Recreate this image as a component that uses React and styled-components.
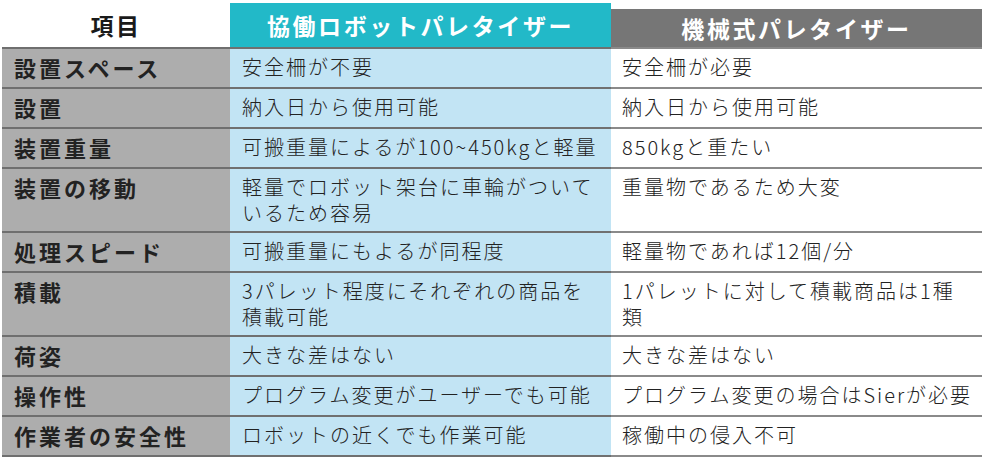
import React from "react";
import styled, { createGlobalStyle } from "styled-components";

const Global = createGlobalStyle`
  html, body { margin: 0; padding: 0; background: #ffffff; }
  body { font-family: "Noto Sans CJK JP", "Noto Sans", sans-serif; }
`;

const Table = styled.div`
  width: 980px;
  margin-left: 2px;
  display: grid;
  grid-template-columns: 228px 381px 371px;
`;

const HeadWrap = styled.div`
  height: 47px;
  display: flex;
  flex-direction: column;
  justify-content: flex-end;
`;

const HeadCell = styled.div`
  display: flex;
  align-items: center;
  justify-content: center;
  height: ${(p) => p.$h}px;
  background: ${(p) => p.$bg};
  color: ${(p) => p.$fg};
  font-weight: 700;
  font-size: 23px;
  letter-spacing: 2.6px;
`;

const Cell = styled.div`
  border-top: 2px solid ${(p) => p.$line};
  background: ${(p) => p.$bg};
  padding: 5px 4px 5px ${(p) => p.$pl}px;
  line-height: 26px;
  min-height: 28px;
  color: #222;
  font-size: ${(p) => (p.$head ? 22 : 20)}px;
  font-weight: ${(p) => (p.$head ? 700 : 300)};
  letter-spacing: ${(p) => (p.$head ? 3 : 2)}px;
  overflow: hidden;
`;

const Line = styled.span`
  display: block;
  white-space: nowrap;
`;

const BottomLine = styled.div`
  height: 2px;
  background: ${(p) => p.$line};
`;

const rows = [
  ["設置スペース", ["安全柵が不要"], ["安全柵が必要"]],
  ["設置", ["納入日から使用可能"], ["納入日から使用可能"]],
  ["装置重量", ["可搬重量によるが100~450kgと軽量"], ["850kgと重たい"]],
  ["装置の移動", ["軽量でロボット架台に車輪がついて", "いるため容易"], ["重量物であるため大変"]],
  ["処理スピード", ["可搬重量にもよるが同程度"], ["軽量物であれば12個/分"]],
  ["積載", ["3パレット程度にそれぞれの商品を", "積載可能"], ["1パレットに対して積載商品は1種", "類"]],
  ["荷姿", ["大きな差はない"], ["大きな差はない"]],
  ["操作性", ["プログラム変更がユーザーでも可能"], ["プログラム変更の場合はSierが必要"]],
  ["作業者の安全性", ["ロボットの近くでも作業可能"], ["稼働中の侵入不可"]],
];

const Lines = ({ items }) => items.map((t, i) => <Line key={i}>{t}</Line>);

export default function App() {
  return (
    <>
      <Global />
      <Table>
        <HeadWrap>
          <HeadCell $h={44} $bg="#ffffff" $fg="#1a1a1a">項目</HeadCell>
        </HeadWrap>
        <HeadWrap>
          <HeadCell $h={44} $bg="#22b9c8" $fg="#ffffff">協働ロボットパレタイザー</HeadCell>
        </HeadWrap>
        <HeadWrap>
          <HeadCell $h={38} $bg="#767676" $fg="#ffffff">機械式パレタイザー</HeadCell>
        </HeadWrap>
        {rows.map((r, i) => (
          <React.Fragment key={i}>
            <Cell $head $bg="#adadad" $line="#6f6f6f" $pl={12}>{r[0]}</Cell>
            <Cell $bg="#c2e4f4" $line="#707070" $pl={12}><Lines items={r[1]} /></Cell>
            <Cell $bg="#ffffff" $line="#8a8a8a" $pl={11}><Lines items={r[2]} /></Cell>
          </React.Fragment>
        ))}
        <BottomLine $line="#6f6f6f" />
        <BottomLine $line="#707070" />
        <BottomLine $line="#8a8a8a" />
      </Table>
    </>
  );
}
